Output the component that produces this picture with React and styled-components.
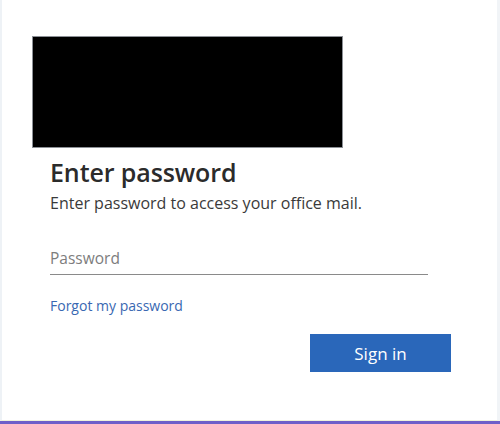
import React from "react";
import styled, { createGlobalStyle } from "styled-components";

const Global = createGlobalStyle`
  html, body { margin: 0; padding: 0; background: #ffffff; }
  body { font-family: "Open Sans", "Noto Sans", sans-serif; }
`;

const Page = styled.div`
  width: 500px;
  height: 424px;
  box-sizing: border-box;
  display: flex;
  flex-direction: column;
  background: #ffffff;
`;

const Card = styled.main`
  flex: 1;
  box-sizing: border-box;
  border-left: 2px solid #eef2f6;
  border-right: 3px solid #f1f4f7;
  border-bottom: 1px solid #eef3dc;
  padding: 36px 0 0 30px;
  display: flex;
  flex-direction: column;
`;

const Logo = styled.div`
  width: 311px;
  height: 112px;
  background: #000000;
  border: 1px solid #8c9096;
  box-sizing: border-box;
`;

const Form = styled.form`
  padding: 8px 0 0 18px;
  display: flex;
  flex-direction: column;
`;

const Title = styled.h1`
  margin: 0;
  font-size: 25px;
  font-weight: 600;
  line-height: 32px;
  color: #2b2b2b;
  letter-spacing: -0.1px;
`;

const Subtitle = styled.p`
  margin: 5px 0 0;
  font-size: 16px;
  line-height: 20px;
  color: #3a3a3a;
`;

const Input = styled.input`
  margin-top: 35px;
  width: 378px;
  box-sizing: border-box;
  border: none;
  border-bottom: 1px solid #8a8a8a;
  padding: 0 0 6px;
  font-family: inherit;
  font-size: 15.5px;
  line-height: 20px;
  color: #333;
  outline: none;
  background: transparent;
  &::placeholder { color: #7d7d7d; }
`;

const Link = styled.a`
  margin-top: 22px;
  font-size: 14px;
  line-height: 18px;
  color: #3968b2;
  text-decoration: none;
  align-self: flex-start;
`;

const Actions = styled.div`
  margin-top: 19px;
  width: 401px;
  display: flex;
  justify-content: flex-end;
`;

const Button = styled.button`
  width: 141px;
  height: 38px;
  border: none;
  background: #2a67ba;
  color: #ffffff;
  font-family: inherit;
  font-size: 17px;
  cursor: pointer;
`;

const Bar = styled.div`
  height: 3px;
  background: #6e5fc9;
`;

export default function App() {
  return (
    <Page>
      <Global />
      <Card>
        <Logo />
        <Form onSubmit={(e) => e.preventDefault()}>
          <Title>Enter password</Title>
          <Subtitle>Enter password to access your office mail.</Subtitle>
          <Input type="password" placeholder="Password" />
          <Link href="#">Forgot my password</Link>
          <Actions>
            <Button type="submit">Sign in</Button>
          </Actions>
        </Form>
      </Card>
      <Bar />
    </Page>
  );
}
